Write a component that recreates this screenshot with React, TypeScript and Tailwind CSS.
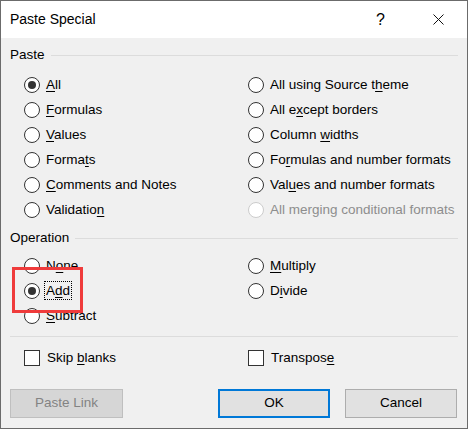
import React from 'react';

type Opt = { pre: string; key: string; post: string; checked?: boolean; disabled?: boolean; focus?: boolean };

const Label = ({ o }: { o: Opt }) => (
    <span
        className={`px-[1px] leading-[17px] border border-dotted ${o.focus ? 'border-black' : 'border-transparent'} ${o.disabled ? 'text-[#8d8d8d]' : 'text-black'}`}
    >
        {o.pre}
        {o.key && <u className="underline underline-offset-2">{o.key}</u>}
        {o.post}
    </span>
);

const Radio = ({ o }: { o: Opt }) => (
    <div className="h-[25px] flex items-center gap-[4px]">
        <span
            className={`w-[16px] h-[16px] rounded-full border bg-white flex items-center justify-center shrink-0 ${o.disabled ? 'border-[#cccccc]' : 'border-[#333333]'}`}
        >
            {o.checked && <span className="w-[8px] h-[8px] rounded-full bg-[#333333]" />}
        </span>
        <Label o={o} />
    </div>
);

const Checkbox = ({ o }: { o: Opt }) => (
    <div className="h-[25px] flex items-center gap-[5px]">
        <span className="w-[16px] h-[16px] border border-[#333333] bg-white shrink-0" />
        <Label o={o} />
    </div>
);

const GroupHeader = ({ title }: { title: string }) => (
    <div className="h-[20px] flex items-center pr-[9px]">
        <span>{title}</span>
        <span className="flex-1 h-px bg-[#dcdcdc] ml-[6px]" />
    </div>
);

const pasteLeft: Opt[] = [
    { pre: '', key: 'A', post: 'll', checked: true },
    { pre: '', key: 'F', post: 'ormulas' },
    { pre: '', key: 'V', post: 'alues' },
    { pre: 'Forma', key: 't', post: 's' },
    { pre: '', key: 'C', post: 'omments and Notes' },
    { pre: 'Validatio', key: 'n', post: '' },
];

const pasteRight: Opt[] = [
    { pre: 'All using Source t', key: 'h', post: 'eme' },
    { pre: 'All e', key: 'x', post: 'cept borders' },
    { pre: 'Column ', key: 'w', post: 'idths' },
    { pre: 'Fo', key: 'r', post: 'mulas and number formats' },
    { pre: 'Val', key: 'u', post: 'es and number formats' },
    { pre: 'All merging conditional formats', key: '', post: '', disabled: true },
];

const opLeft: Opt[] = [
    { pre: 'N', key: 'o', post: 'ne' },
    { pre: 'A', key: 'd', post: 'd', checked: true, focus: true },
    { pre: '', key: 'S', post: 'ubtract' },
];

const opRight: Opt[] = [
    { pre: '', key: 'M', post: 'ultiply' },
    { pre: 'D', key: 'i', post: 'vide' },
];

export default function App() {
    return (
        <div className="relative w-[468px] h-[429px] bg-[#f0f0f0] border border-[#6b6b6b] flex flex-col font-['Liberation_Sans',Arial,sans-serif] text-[13.5px] text-black">
            {/* Title bar */}
            <div className="h-[37px] bg-white flex items-center pl-[9px] pr-[23px] shrink-0">
                <span className="flex-1 text-[14px]">Paste Special</span>
                <span className="text-[16px] leading-none">?</span>
                <svg className="ml-[48px]" width="11" height="11" viewBox="0 0 11 11">
                    <path d="M0.5 0.5 L10.5 10.5 M10.5 0.5 L0.5 10.5" stroke="#111" strokeWidth="1" fill="none" />
                </svg>
            </div>

            <div className="flex-1 pl-[9px] flex flex-col">
                {/* Paste */}
                <div className="mt-[7px]">
                    <GroupHeader title="Paste" />
                </div>
                <div className="mt-[7px] ml-[14px] grid grid-cols-[224px_1fr]">
                    <div className="flex flex-col">
                        {pasteLeft.map((o) => (
                            <Radio key={o.pre + o.key + o.post} o={o} />
                        ))}
                    </div>
                    <div className="flex flex-col">
                        {pasteRight.map((o) => (
                            <Radio key={o.pre + o.key + o.post} o={o} />
                        ))}
                    </div>
                </div>

                {/* Operation */}
                <div className="mt-[6px]">
                    <GroupHeader title="Operation" />
                </div>
                <div className="mt-[5px] ml-[14px] grid grid-cols-[224px_1fr]">
                    <div className="flex flex-col">
                        {opLeft.map((o) => (
                            <Radio key={o.pre + o.key + o.post} o={o} />
                        ))}
                    </div>
                    <div className="flex flex-col">
                        {opRight.map((o) => (
                            <Radio key={o.pre + o.key + o.post} o={o} />
                        ))}
                    </div>
                </div>

                <div className="mt-[8px] mr-[9px] h-px bg-[#dcdcdc]" />

                {/* Options */}
                <div className="mt-[8px] ml-[14px] grid grid-cols-[224px_1fr]">
                    <Checkbox o={{ pre: 'Skip ', key: 'b', post: 'lanks' }} />
                    <Checkbox o={{ pre: 'Transpos', key: 'e', post: '' }} />
                </div>

                {/* Buttons */}
                <div className="mt-[19px] flex items-center pr-[10px]">
                    <button className="w-[113px] h-[29px] bg-[#d6d6d6] border border-[#bfbfbf] text-[#838383]">
                        Paste Link
                    </button>
                    <button className="ml-auto w-[112px] h-[29px] bg-[#e1e1e1] border-2 border-[#0078d7]">OK</button>
                    <button className="ml-[15px] w-[112px] h-[29px] bg-[#e1e1e1] border border-[#adadad]">Cancel</button>
                </div>
            </div>

            {/* Annotation highlight */}
            <div className="absolute left-[11px] top-[266px] w-[71px] h-[46px] border-[3px] border-[#ef3b3b] pointer-events-none" />
        </div>
    );
}
